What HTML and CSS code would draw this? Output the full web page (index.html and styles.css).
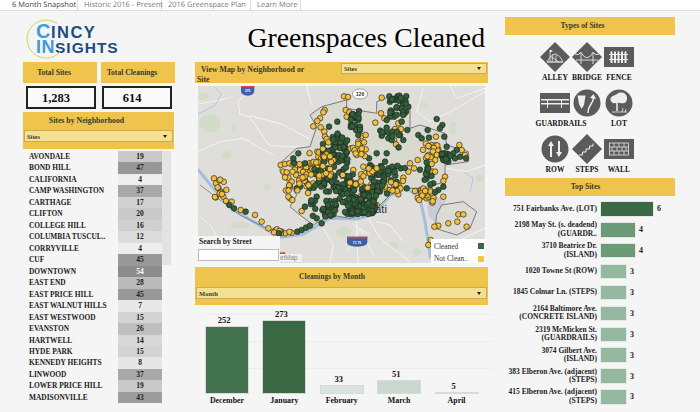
FILE: index.html
```html
<!DOCTYPE html>
<html lang="en">
<head>
<meta charset="utf-8">
<title>Greenspaces Cleaned</title>
<link rel="stylesheet" href="styles.css">
</head>
<body>
<nav class="tabs">
  <span class="tab tab-active">6 Month Snapshot</span>
  <span class="tab">Historic 2016 - Present</span>
  <span class="tab">2016 Greenspace Plan</span>
  <span class="tab">Learn More</span>
</nav>
<main class="dash">
  <section class="col-left">
    <div class="logo">
      <svg class="logo-ring" viewBox="0 0 40 40"><path d="M31 4.500A19 19 0 1 0 34 33" fill="none" stroke="#cfd65a" stroke-width="1"/></svg>
      <div class="logo-line logo-line-1"><b class="logo-c logo-big">C</b>INCY</div>
      <div class="logo-line"><b class="logo-c">IN</b>SIGHTS</div>
    </div>
    <div class="kpi-heads">
      <div class="gold kpi-head">Total Sites</div>
      <div class="gold kpi-head">Total Cleanings</div>
    </div>
    <div class="kpi-vals">
      <div class="kpi-val">1,283</div>
      <div class="kpi-val">614</div>
    </div>
    <div class="gold hood-head">
      <div class="hood-title">Sites by Neighborhood</div>
      <div class="select"><span>Sites</span><i class="caret"></i></div>
    </div>
    <div class="hood-body">
      <div class="hood-list">
        <div class="hood-row"><span class="hood-name">AVONDALE</span><span class="hood-val" style="background:#c9c9c9">19</span></div>
        <div class="hood-row"><span class="hood-name">BOND HILL</span><span class="hood-val" style="background:#989898">47</span></div>
        <div class="hood-row"><span class="hood-name">CALIFORNIA</span><span class="hood-val" style="background:#eeeeee">4</span></div>
        <div class="hood-row"><span class="hood-name">CAMP WASHINGTON</span><span class="hood-val" style="background:#a9a9a9">37</span></div>
        <div class="hood-row"><span class="hood-name">CARTHAGE</span><span class="hood-val" style="background:#d0d0d0">17</span></div>
        <div class="hood-row"><span class="hood-name">CLIFTON</span><span class="hood-val" style="background:#c9c9c9">20</span></div>
        <div class="hood-row"><span class="hood-name">COLLEGE HILL</span><span class="hood-val" style="background:#d0d0d0">16</span></div>
        <div class="hood-row"><span class="hood-name">COLUMBIA TUSCUL..</span><span class="hood-val" style="background:#dcdcdc">12</span></div>
        <div class="hood-row"><span class="hood-name">CORRYVILLE</span><span class="hood-val" style="background:#eeeeee">4</span></div>
        <div class="hood-row"><span class="hood-name">CUF</span><span class="hood-val" style="background:#999999">45</span></div>
        <div class="hood-row"><span class="hood-name">DOWNTOWN</span><span class="hood-val hood-val-max" style="background:#8c8c8c">54</span></div>
        <div class="hood-row"><span class="hood-name">EAST END</span><span class="hood-val" style="background:#bababa">28</span></div>
        <div class="hood-row"><span class="hood-name">EAST PRICE HILL</span><span class="hood-val" style="background:#999999">45</span></div>
        <div class="hood-row"><span class="hood-name">EAST WALNUT HILLS</span><span class="hood-val" style="background:#e8e8e8">7</span></div>
        <div class="hood-row"><span class="hood-name">EAST WESTWOOD</span><span class="hood-val" style="background:#d3d3d3">15</span></div>
        <div class="hood-row"><span class="hood-name">EVANSTON</span><span class="hood-val" style="background:#bfbfbf">26</span></div>
        <div class="hood-row"><span class="hood-name">HARTWELL</span><span class="hood-val" style="background:#d8d8d8">14</span></div>
        <div class="hood-row"><span class="hood-name">HYDE PARK</span><span class="hood-val" style="background:#d3d3d3">15</span></div>
        <div class="hood-row"><span class="hood-name">KENNEDY HEIGHTS</span><span class="hood-val" style="background:#e6e6e6">8</span></div>
        <div class="hood-row"><span class="hood-name">LINWOOD</span><span class="hood-val" style="background:#a9a9a9">37</span></div>
        <div class="hood-row"><span class="hood-name">LOWER PRICE HILL</span><span class="hood-val" style="background:#c9c9c9">19</span></div>
        <div class="hood-row"><span class="hood-name">MADISONVILLE</span><span class="hood-val" style="background:#9d9d9d">43</span></div>
      </div>
      <div class="hood-track"></div>
    </div>
  </section>

  <section class="col-mid">
    <h1 class="title">Greenspaces Cleaned</h1>
    <div class="gold map-head">
      <div class="map-head-text">View Map by Neighborhood or Site</div>
      <div class="select map-select"><span>Sites</span><i class="caret"></i></div>
    </div>
    <div class="map">
      <svg id="mapsvg" class="map-svg" viewBox="24 93 861 531" preserveAspectRatio="none">
        <rect x="24" y="93" width="861" height="531" fill="#dfdeda"/>
        <g fill="#d3dcc8">
          <ellipse cx="60" cy="205" rx="32" ry="28"/><ellipse cx="132" cy="217" rx="8" ry="14"/><ellipse cx="110" cy="300" rx="16" ry="14"/>
          <ellipse cx="40" cy="125" rx="14" ry="10"/><ellipse cx="230" cy="395" rx="10" ry="12"/><ellipse cx="700" cy="150" rx="16" ry="7"/>
          <ellipse cx="640" cy="170" rx="12" ry="8"/><ellipse cx="790" cy="220" rx="10" ry="20"/><ellipse cx="870" cy="370" rx="12" ry="12"/>
          <ellipse cx="460" cy="530" rx="24" ry="16"/><ellipse cx="150" cy="510" rx="30" ry="10"/><ellipse cx="610" cy="570" rx="16" ry="10"/><ellipse cx="680" cy="590" rx="14" ry="12"/>
        </g>
        <g fill="none" stroke="#f4f4f2" stroke-width="3" stroke-linejoin="round">
          <path d="M172 117 144 137 149 177 179 187 239 272 354 277"/>
          <path d="M179 182 274 207 359 252"/>
          <path d="M24 147 84 137 124 127"/>
          <path d="M24 290 90 260 160 250 250 300"/>
          <path d="M350 93 365 150"/>
          <path d="M700 100 680 170 720 200 800 160 885 110"/>
          <path d="M780 93 800 130 885 100"/>
          <path d="M770 340 830 350 885 330"/>
          <path d="M500 490 500 560 505 624"/>
          <path d="M530 480 570 550 660 620"/>
          <path d="M560 500 600 510 640 560"/>
          <path d="M400 520 430 570 420 624"/>
          <path d="M760 620 800 560 885 520"/>
          <path d="M24 480 60 510 90 560"/>
          <path d="M510 520 470 590M510 520 550 600M490 510 540 540"/>
        </g>
        <g fill="none" stroke="#9db9d6">
          <path d="M74 97 94 117 74 152 24 177" stroke-width="2"/>
          <path d="M820 350 850 370 840 410" stroke-width="2"/>
        </g>
        <path d="M24 343 70 400 130 465 200 505 270 547 340 538 420 490 500 492 550 478 600 422 650 400 690 430 705 500 722 610" fill="none" stroke="#a4bfdc" stroke-width="9" stroke-linejoin="round"/>
        <path d="M710 420 770 430 740 510 715 480Z" fill="#c8cbd8"/>
        <path d="M360 180 395 155 470 135 470 160 560 175 560 140 600 125 660 150 660 220 690 210 765 235 770 270 835 290 835 320 765 330 765 380 700 400 640 400 600 420 550 470 480 490 420 480 370 510 330 480 300 455 320 420 270 350 270 325 320 280 360 275 380 215Z" fill="#d9d9d0" stroke="#666" stroke-width="2.5" stroke-linejoin="round"/>
        <path d="M755 450 820 440 860 470 840 520 800 540 735 520 740 480Z" fill="#dcdbd5" stroke="#666" stroke-width="2.5" stroke-linejoin="round"/>
        <path d="M30 390 150 480 220 515 290 540" fill="none" stroke="#666" stroke-width="2"/>
        <g id="dots"></g>
        <g class="shield">
          <path d="M153 93H193V106Q193 122 173 122 153 122 153 106Z" fill="#3f5fa8"/><rect x="153" y="93" width="40" height="4" fill="#d8443c"/>
          <text x="173" y="112" class="shield-text">275</text>
          <path d="M471 545H532V562Q532 575 501 575 471 575 471 562Z" fill="#3f5fa8"/><rect x="471" y="545" width="61" height="5" fill="#d8443c"/>
          <text x="501" y="566" class="shield-text">71 75</text>
          <ellipse cx="510" cy="117" rx="23" ry="15" fill="#fff" stroke="#555" stroke-width="1.5"/>
          <text x="510" y="123" class="shield-dark">126</text>
          <text x="555" y="474" class="map-city">ati</text>
          <rect x="270" y="592" width="16" height="5" fill="#d8443c"/>
          <rect x="270" y="597" width="66" height="24" fill="#f2f2f0" opacity=".8"/>
          <text x="270" y="616" class="map-osm">etMap</text>
        </g>
      </svg>
      <div class="search">
        <div class="search-label">Search by Street</div>
        <div class="search-box"></div>
      </div>
      <div class="legend">
        <div class="legend-row"><span>Cleaned</span><i class="swatch swatch-green"></i></div>
        <div class="legend-row"><span>Not Clean..</span><i class="swatch swatch-gold"></i></div>
      </div>
    </div>
    <div class="gold month-head">
      <div class="month-title">Cleanings by Month</div>
      <div class="select"><span>Month</span><i class="caret"></i></div>
    </div>
    <div class="chart">
      <div class="month-col"><span class="month-val">252</span><div class="month-bar" style="height:68px;background:#44734f"></div><span class="month-name">December</span></div>
      <div class="month-col"><span class="month-val">273</span><div class="month-bar" style="height:74px;background:#3a6842"></div><span class="month-name">January</span></div>
      <div class="month-col"><span class="month-val">33</span><div class="month-bar" style="height:9px;background:#dae4de"></div><span class="month-name">February</span></div>
      <div class="month-col"><span class="month-val">51</span><div class="month-bar" style="height:14px;background:#c8d8ce"></div><span class="month-name">March</span></div>
      <div class="month-col"><span class="month-val">5</span><div class="month-bar" style="height:1px;background:#e2e8e4"></div><span class="month-name">April</span></div>
    </div>
  </section>

  <section class="col-right">
    <div class="gold side-head side-types">Types of Sites</div>
    <div class="types">
      <figure class="type">
        <svg class="type-icon" viewBox="0 0 30 30"><path d="M15 0 30 15 15 30 0 15Z" fill="#5b5b5b"/><g fill="none" stroke="#e6e6e6" stroke-width=".8"><path d="M10 19V8"/><path d="M7 20Q12 11 16 12T23 20Z"/><path d="M10 14 19 20M13 12 12 20M16 13 16 20M7 20H23"/></g><path d="M10 7.500 13 9 10 10.500Z" fill="#eee"/></svg>
        <figcaption>ALLEY</figcaption>
      </figure>
      <figure class="type">
        <svg class="type-icon" viewBox="0 0 30 30"><path d="M15 0 30 15 15 30 0 15Z" fill="#5b5b5b"/><g fill="none" stroke="#e6e6e6" stroke-width=".9"><path d="M4 18H26"/><path d="M9 10V22M21 10V22"/><path d="M3 12Q6 14 9 10.500 15 21 21 10.500 24 14 27 12"/></g></svg>
        <figcaption>BRIDGE</figcaption>
      </figure>
      <figure class="type">
        <svg class="type-icon" viewBox="0 0 30 30"><rect y="5" width="30" height="20" fill="#5b5b5b"/><g fill="#eee"><path d="M6.500 10 7.500 9 8.500 10V21H6.500ZM10 10 11 9 12 10V21H10ZM13.500 10 14.500 9 15.500 10V21H13.500ZM17 10 18 9 19 10V21H17ZM20.500 10 21.500 9 22.500 10V21H20.500Z"/><rect x="5" y="12" width="19" height="1"/><rect x="5" y="17" width="19" height="1"/></g></svg>
        <figcaption>FENCE</figcaption>
      </figure>
      <figure class="type">
        <svg class="type-icon" viewBox="0 0 30 30"><rect y="5" width="30" height="20" fill="#5b5b5b"/><g fill="#eee"><rect x="1" y="11" width="28" height="1.500"/><rect x="1" y="15" width="28" height="1.500"/><rect x="7" y="11" width="1" height="9"/><rect x="21" y="11" width="1" height="9"/></g></svg>
        <figcaption class="type-wide">GUARDRAILS</figcaption>
      </figure>
      <figure class="type">
        <svg class="type-icon" viewBox="0 0 30 30"><circle cx="15" cy="15" r="13.500" fill="#5b5b5b"/><path d="M5.500 7.500H13.500L12 17 9.500 21 7 16Z" fill="#eee"/><path d="M16 25Q16 20 19 16T21 9" fill="none" stroke="#eee" stroke-width="1.500"/><path d="M18 10 21.500 6 24 11Z" fill="#eee"/></svg>
        <figcaption>&nbsp;</figcaption>
      </figure>
      <figure class="type">
        <svg class="type-icon" viewBox="0 0 30 30"><circle cx="15" cy="15" r="13.500" fill="#5b5b5b"/><path d="M13 6C17 3 23 5 23 10S20 16 16 15 9 17 7 13 9 8 13 6Z" fill="#eee"/><path d="M13 15V23" stroke="#eee" stroke-width="1.500"/><path d="M8 24H23M18 24 19 20M21 24 22 21" stroke="#eee" stroke-width=".8" fill="none"/></svg>
        <figcaption>LOT</figcaption>
      </figure>
      <figure class="type">
        <svg class="type-icon" viewBox="0 0 30 30"><circle cx="15" cy="15" r="13.500" fill="#5b5b5b"/><g fill="#eee"><path d="M11 7 14 12H12V23H10V12H8Z"/><path d="M19 23 16 18H18V7H20V18H22Z"/></g></svg>
        <figcaption>ROW</figcaption>
      </figure>
      <figure class="type">
        <svg class="type-icon" viewBox="0 0 30 30"><path d="M15 0 30 15 15 30 0 15Z" fill="#5b5b5b"/><path d="M7 21H10.500V18H14V15H17.500V12H21V9.500" fill="none" stroke="#eee" stroke-width="1"/></svg>
        <figcaption>STEPS</figcaption>
      </figure>
      <figure class="type">
        <svg class="type-icon" viewBox="0 0 30 30"><rect y="5" width="30" height="20" fill="#5b5b5b"/><g fill="none" stroke="#e6e6e6" stroke-width=".8"><rect x="5.500" y="9" width="19" height="12"/><path d="M5.500 13H24.500M5.500 17H24.500M10 9V13M15 9V13M20 9V13M8 13V17M13 13V17M18 13V17M22 13V17M10 17V21M15 17V21M20 17V21"/></g></svg>
        <figcaption>WALL</figcaption>
      </figure>
    </div>
    <div class="gold side-head top-head">Top Sites</div>
    <div class="top-list">
      <div class="top-row"><div class="top-name">751 Fairbanks Ave. (LOT)</div><div class="top-bar" style="width:54px;background:#3b6943"></div><span class="top-val">6</span></div>
      <div class="top-row"><div class="top-name">2198 May St. (s. deadend)<br>(GUARDR..</div><div class="top-bar" style="width:36px;background:#6b9b76"></div><span class="top-val">4</span></div>
      <div class="top-row"><div class="top-name">3710 Beatrice Dr.<br>(ISLAND)</div><div class="top-bar" style="width:36px;background:#6b9b76"></div><span class="top-val">4</span></div>
      <div class="top-row"><div class="top-name">1020 Towne St (ROW)</div><div class="top-bar" style="width:27px;background:#94b8a0"></div><span class="top-val">3</span></div>
      <div class="top-row"><div class="top-name">1845 Colmar Ln. (STEPS)</div><div class="top-bar" style="width:27px;background:#94b8a0"></div><span class="top-val">3</span></div>
      <div class="top-row"><div class="top-name">2164 Baltimore Ave.<br>(CONCRETE ISLAND)</div><div class="top-bar" style="width:27px;background:#94b8a0"></div><span class="top-val">3</span></div>
      <div class="top-row"><div class="top-name">2319 McMicken St.<br>(GUARDRAILS)</div><div class="top-bar" style="width:27px;background:#94b8a0"></div><span class="top-val">3</span></div>
      <div class="top-row"><div class="top-name">3074 Gilbert Ave.<br>(ISLAND)</div><div class="top-bar" style="width:27px;background:#94b8a0"></div><span class="top-val">3</span></div>
      <div class="top-row"><div class="top-name">383 Elberon Ave. (adjacent)<br>(STEPS)</div><div class="top-bar" style="width:27px;background:#94b8a0"></div><span class="top-val">3</span></div>
      <div class="top-row"><div class="top-name">415 Elberon Ave. (adjacent)<br>(STEPS)</div><div class="top-bar" style="width:27px;background:#94b8a0"></div><span class="top-val">3</span></div>
    </div>
  </section>
</main>
<script src="map.js"></script>
</body>
</html>
```
FILE: styles.css
```css
* { box-sizing: border-box; }
html, body { margin: 0; height: 412px; overflow: hidden; }
body { background: #f5f5f5; font-family: "Liberation Serif", serif; font-weight: 700; color: #1c1c1c; font-size: 8px; }

.tabs { display: flex; height: 11px; background: #fff; border-bottom: 1px solid #dcdcdc; padding-left: 6px; font: 400 7.5px/11px "Open Sans", sans-serif; text-rendering: geometricPrecision; color: #777; }
.tab { width: 72px; height: 10px; padding-left: 6px; border-right: 1px solid #ddd; white-space: nowrap; }
.tab:nth-child(2) { width: 84px; }
.tab:nth-child(3) { width: 89px; }
.tab:nth-child(4) { width: 50px; border-right: 1px solid #ddd; }
.tab-active { background: #fff; color: #444; }

.dash { display: grid; grid-template-columns: 152px 293px 170px; column-gap: 20px; padding-left: 23px; align-items: start; }
.dash > section:last-child { margin-left: -3px; }

.col-left { padding-top: 8px; }
.logo { position: relative; height: 43px; padding: 4px 0 0 13px; font: 700 15.500px/16px "Liberation Sans", sans-serif; color: #1f4b82; letter-spacing: 1px; }
.logo-c { color: #3f9ddb; font-size: 18px; letter-spacing: .5px; }
.logo-big { font-size: 20px; }
.logo-line { height: 16px; white-space: nowrap; }
.logo-line-1 { font-size: 16.500px; letter-spacing: 1.500px; }
.logo-ring { position: absolute; left: 3px; top: 0; width: 40px; height: 40px; }

.gold { background: #eec44c; }
.kpi-heads, .kpi-vals { display: flex; }
.kpi-heads { gap: 4px; }
.kpi-head { width: 74px; height: 21px; padding-right: 12px; font-size: 7.6px; line-height: 21px; text-align: center; color: #3a3a2a; }
.kpi-vals { gap: 6px; padding: 3px 0 3px 3px; }
.kpi-val { width: 70px; height: 23px; padding-right: 10px; border: 2px solid #222; background: #fafafa; font-size: 12.500px; line-height: 20px; text-align: center; color: #111; }
.hood-head { width: 151px; height: 37px; padding: 0 1px; }
.hood-title { height: 18px; padding-right: 24px; font-size: 7.8px; line-height: 18px; text-align: center; color: #3a3a2a; }
.select { display: flex; align-items: center; justify-content: space-between; height: 12px; padding: 0 5px 0 2px; background: #f5df90; border: 1px solid #c9ab55; font-size: 6.500px; color: #3a3a2a; }
.caret { width: 0; height: 0; border: 2px solid transparent; border-top: 3px solid #222; border-bottom: 0; }

.hood-body { display: flex; padding-top: 2px; }
.hood-list { width: 139px; }
.hood-track { width: 9px; height: 114px; background: #e3e3e3; }
.hood-row { display: flex; height: 11.48px; padding-left: 6px; align-items: stretch; }
.hood-name { width: 89px; font-size: 7.4px; line-height: 11.48px; white-space: nowrap; color: #222; }
.hood-val { width: 44px; font-size: 7.5px; line-height: 11.48px; text-align: center; color: #222; }
.hood-val-max { color: #fff; }

.col-mid { width: 293px; }
.title { height: 51px; margin: 0; padding: 11px 3px 0 0; font-size: 27.7px; line-height: 32px; font-weight: 400; text-align: right; color: #000; white-space: nowrap; }
.map-head { display: flex; height: 21px; padding: 1px 1px 0 2px; font-size: 7.8px; line-height: 9.500px; color: #3a3a2a; }
.map-head-text { width: 144px; padding: 2px 34px 0 0; text-indent: 4px; }
.map-select { flex: 1; height: 11px; }
.map { position: relative; width: 287px; height: 177px; margin: 3px 0 4px 3px; overflow: hidden; }
.map-svg { display: block; width: 100%; height: 100%; }
.shield-text { font: 700 10px "Liberation Sans", sans-serif; fill: #fff; text-anchor: middle; }
.shield-dark { font: 700 15px "Liberation Sans", sans-serif; fill: #333; text-anchor: middle; }
.map-city { font: 400 34px "Liberation Sans", sans-serif; fill: #333; }
.map-osm { font: 400 19px "Liberation Sans", sans-serif; fill: #888; }
.search { position: absolute; left: 0; top: 150px; width: 82px; height: 27px; background: #f5f5f5; font-size: 7.5px; line-height: 12px; color: #222; }
.search-label { padding-left: 1px; }
.search-box { width: 81px; height: 12px; margin-top: 1px; background: #fff; border: 1px solid #bbb; }
.legend { position: absolute; right: 0; bottom: 0; width: 54px; height: 24px; background: #fff; padding: 1px 1px 0 3px; font-weight: 400; font-size: 7.400px; color: #333; }
.legend-row { display: flex; align-items: center; justify-content: space-between; height: 12.500px; white-space: nowrap; }
.swatch { width: 6px; height: 6px; }
.swatch-green { background: #3a6842; }
.swatch-gold { background: #eec44c; }

.month-head { height: 38px; padding: 0 1px; }
.month-title { height: 20px; padding-right: 19px; font-size: 7.6px; line-height: 20px; text-align: center; color: #3a3a2a; }
.chart { display: grid; grid-template-columns: repeat(5, 57.4px); align-items: end; height: 104px; margin-left: 10px; width: 287px; background: linear-gradient(#ececec, #ececec) 0 9px / 100% 1px no-repeat, linear-gradient(#ececec, #ececec) 0 36px / 100% 1px no-repeat, linear-gradient(#ececec, #ececec) 0 63px / 100% 1px no-repeat; }
.month-col { display: flex; flex-direction: column; align-items: flex-start; }
.month-val { width: 38px; text-align: center; font-size: 8.500px; line-height: 11px; color: #111; }
.month-bar { width: 44px; border: 1px solid #d9d9d9; }
.month-name { width: 44px; height: 15px; text-align: center; font-size: 7.900px; line-height: 14px; color: #111; }

.col-right { padding-top: 6px; width: 170px; }
.side-head { height: 18px; font-size: 7.6px; line-height: 18px; text-align: center; color: #3a3a2a; }
.side-types { padding-right: 15px; }
.types { display: grid; grid-template-columns: repeat(3, 32px); row-gap: 5px; padding: 7px 0 0 34px; }
.type { display: flex; flex-direction: column; align-items: center; margin: 0; }
.type-icon { display: block; width: 30px; height: 30px; }
.type figcaption { font-size: 7.5px; line-height: 11px; white-space: nowrap; color: #111; letter-spacing: .05px; }
.type .type-wide { margin-left: 12px; }
.top-head { margin-top: 3px; padding-right: 9px; }
.top-list { padding-top: 2.500px; }
.top-row { display: flex; align-items: center; height: 20.9px; }
.top-name { width: 95px; margin-left: -3px; font-size: 7.5px; line-height: 8.500px; text-align: right; white-space: nowrap; color: #222; }
.top-bar { height: 15.500px; margin-left: 3px; border: 1px solid #e4e9e4; }
.top-val { margin-left: 3px; font-size: 8px; color: #222; }
```
FILE: map.js
```js
var GREEN = [622,124,628,122,615,135,628,138,640,140,655,155,620,158,632,160,648,170,605,170,612,185,600,185,590,195,635,200,640,175,507,168,495,190,505,195,495,210,510,215,498,225,510,225,505,240,442,200,417,215,580,233,590,218,597,235,595,250,605,255,630,240,640,255,652,225,740,192,757,210,750,220,713,225,685,240,695,250,717,248,763,245,770,275,800,285,790,295,770,300,760,315,775,320,795,310,810,305,828,310,325,295,310,310,312,325,345,325,118,450,132,460,167,470,267,535,322,530,335,525,348,518,360,512,590,295,560,295,537,310,540,330,585,320,710,322,712,345,710,370,730,385,760,395,745,405,735,412,650,400,620,395,632,340,612,340,595,340,570,355,555,360,320,400,330,395,345,375,360,400,345,455,380,425,380,490,395,505];
var GOLD = [72,370,78,385,85,398,92,410,100,425,108,438,125,440,152,465,195,480,215,500,235,520,255,527,275,530,285,535,305,533,462,124,474,126,575,128,603,133,404,165,400,172,467,165,478,172,470,185,390,190,382,198,370,214,392,217,403,230,405,245,410,252,415,262,556,203,573,175,583,190,515,243,527,240,505,260,512,265,522,262,510,285,527,283,515,295,500,300,382,290,405,287,385,305,405,310,395,318,358,325,345,328,350,345,272,330,285,327,298,325,280,350,290,352,295,368,305,380,300,395,318,360,330,370,352,385,370,385,390,385,380,350,385,362,385,335,372,330,300,430,295,425,307,435,335,468,625,205,633,222,612,255,618,268,615,222,738,245,725,270,740,275,745,283,730,295,715,300,708,310,683,315,672,340,660,325,655,350,640,368,727,350,735,350,808,270,815,285,825,300,765,365,760,378,625,418,675,408,692,405,697,425,710,430,715,425,727,443,760,425,805,478,820,478,775,505,802,500,830,515,745,512,733,515,722,555,715,570,560,450,520,335,525,355,490,345,480,365,545,365,500,385,590,405,600,405,575,385];

var CLUSTERS = [
  [435,295,38,30,34,"g"],[430,375,60,40,55,"g"],[510,460,45,18,60,"g"],[500,420,65,25,45,"g"],[400,460,38,25,30,"g"],
  [590,360,55,28,30,"g"],[560,410,40,18,16,"g"],[450,255,24,24,22,"g"],[625,150,28,30,18,"g"],[600,250,30,28,8,"g"],
  [775,305,20,16,12,"g"],[495,205,14,28,14,"g"],[710,360,22,30,8,"g"],
  [345,365,60,42,28,"y"],[385,320,28,35,14,"y"],[520,395,60,30,18,"y"],[600,390,40,20,10,"y"],[705,420,28,20,16,"y"],[715,295,28,32,14,"y"],[90,405,22,35,10,"y"],[275,530,25,8,6,"y"]
];
var TOP_GOLD = [[420,345,45,30,10],[520,370,45,30,12],[400,300,25,25,6],[360,385,40,30,12],[510,285,28,22,8],[610,395,30,14,5]];

var seed = 42;
function rnd() { seed = (seed * 16807) % 2147483647; return seed / 2147483647; }

var NS = "http://www.w3.org/2000/svg";
var layer = document.getElementById("dots");
function dot(x, y, color) {
  var c = document.createElementNS(NS, "circle");
  c.setAttribute("cx", x);
  c.setAttribute("cy", y);
  c.setAttribute("r", 8.5);
  c.setAttribute("fill", color);
  c.setAttribute("stroke", "#222");
  c.setAttribute("stroke-width", 2);
  layer.appendChild(c);
}
function scatter(k, color) {
  for (var j = 0; j < k[4]; j++) dot(k[0] + (rnd() * 2 - 1) * k[2], k[1] + (rnd() * 2 - 1) * k[3], color);
}
var YELLOW = "#f2bf3e", DARK = "#2f6038", i;
for (i = 0; i < GOLD.length; i += 2) dot(GOLD[i], GOLD[i + 1], YELLOW);
for (i = 0; i < CLUSTERS.length; i++) if (CLUSTERS[i][5] === "y") scatter(CLUSTERS[i], YELLOW);
for (i = 0; i < GREEN.length; i += 2) dot(GREEN[i], GREEN[i + 1], DARK);
for (i = 0; i < CLUSTERS.length; i++) if (CLUSTERS[i][5] === "g") scatter(CLUSTERS[i], DARK);
for (i = 0; i < TOP_GOLD.length; i++) scatter(TOP_GOLD[i], YELLOW);
```
